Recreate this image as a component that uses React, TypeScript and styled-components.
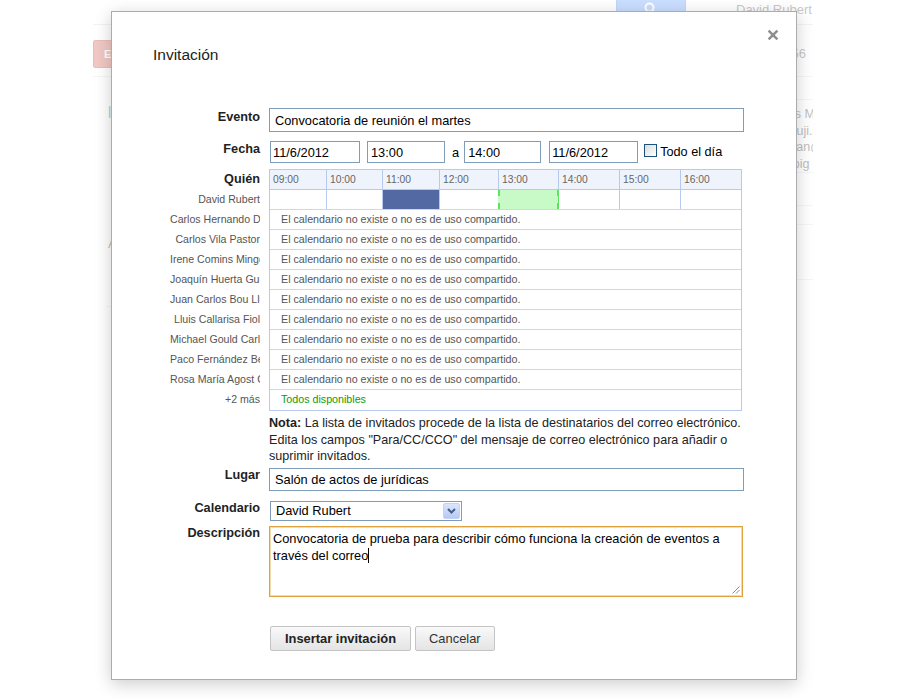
import React from "react";
import styled, { createGlobalStyle } from "styled-components";

const FONT = `"Liberation Sans", Arial, Helvetica, sans-serif`;

const GlobalStyle = createGlobalStyle`
  html, body { margin: 0; padding: 0; background: #fff; }
  body { font-family: ${FONT}; width: 900px; height: 699px; overflow: hidden; }
  * { box-sizing: border-box; }
`;

const Screen = styled.div`
  position: relative;
  width: 900px;
  height: 699px;
  overflow: hidden;
  background: #fff;
`;

/* ---------- background (Gmail page behind the modal) ---------- */
const BgPage = styled.div`
  margin-left: 93px;
  width: 720px;
  height: 699px;
  overflow: hidden;
  color: #222;
  font-size: 13px;
`;

const BgHeader = styled.div`
  height: 25px;
  border-bottom: 1px solid #d6d6d6;
  display: flex;
  align-items: flex-start;
`;

const SearchButton = styled.div`
  margin-left: 523px;
  margin-top: -6px;
  width: 70px;
  height: 30px;
  background: #4d90fe;
  border: 1px solid #3079ed;
  border-radius: 2px;
  display: flex;
  align-items: center;
  justify-content: center;
`;

const BgUser = styled.div`
  margin-left: 50px;
  padding-top: 2px;
  color: #444;
  white-space: nowrap;
`;

const BgToolbar = styled.div`
  height: 52px;
  border-bottom: 1px solid #e0e0e0;
  display: flex;
  align-items: flex-start;
  justify-content: space-between;
`;

const ComposeButton = styled.div`
  margin-top: 15px;
  width: 72px;
  height: 28px;
  background: #d14836;
  border: 1px solid #b0281a;
  border-radius: 2px;
  color: #fff;
  font-weight: bold;
  font-size: 11px;
  line-height: 26px;
  padding-left: 10px;
`;

const PageCount = styled.div`
  margin-top: 21px;
  margin-right: 7px;
  color: #444;
`;

const BgMain = styled.div`
  display: flex;
  height: 620px;
`;

const LeftNav = styled.div`
  width: 120px;
  padding-top: 26px;
  display: flex;
  flex-direction: column;
`;

const NavItem = styled.div<{ $gap?: number }>`
  margin-top: ${(p) => p.$gap ?? 0}px;
  padding-left: 15px;
  height: 15px;
  color: #222;
  white-space: nowrap;
`;

const NavRule = styled.div`
  margin-top: 55px;
  margin-left: 14px;
  border-top: 1px solid #e0e0e0;
`;

const RightPanel = styled.div`
  margin-left: auto;
  width: 48px;
  display: flex;
  flex-direction: column;
`;

const PanelSection = styled.div<{ $h: number }>`
  height: ${(p) => p.$h}px;
  border-bottom: 1px solid #e2e2e2;
  padding-top: 6px;
  padding-left: 0;
  font-size: 12.5px;
  line-height: 16.5px;
  color: #222;
  white-space: nowrap;
`;

const Overlay = styled.div`
  position: absolute;
  inset: 0;
  background: rgba(255, 255, 255, 0.7);
`;

/* ---------- dialog ---------- */
const Dialog = styled.div`
  position: absolute;
  left: 111px;
  top: 11px;
  width: 686px;
  height: 669px;
  background: #fff;
  border: 1px solid #acacac;
  box-shadow: 0 4px 16px rgba(0, 0, 0, 0.2);
  padding: 33px 0 0 41px;
  color: #222;
`;

const CloseButton = styled.button`
  position: absolute;
  top: 17px;
  right: 17px;
  width: 12px;
  height: 12px;
  padding: 0;
  border: 0;
  background: none;
  display: flex;
`;

const Title = styled.h2`
  margin: 0;
  font-size: 15.5px;
  line-height: 20px;
  font-weight: normal;
  color: #222;
`;

const Form = styled.div`
  margin-top: 43px;
  display: flex;
  flex-direction: column;
`;

const FieldRow = styled.div<{ $mt?: number }>`
  display: grid;
  grid-template-columns: 107px 475px;
  column-gap: 9px;
  margin-top: ${(p) => p.$mt ?? 0}px;
`;

const FieldLabel = styled.div<{ $pt?: number }>`
  text-align: right;
  font-weight: bold;
  font-size: 12.7px;
  line-height: 14px;
  color: #222;
  padding-top: ${(p) => p.$pt ?? 0}px;
  white-space: nowrap;
`;

const TextField = styled.input<{ $w?: number; $h?: number; $pl?: number; $ml?: number }>`
  display: block;
  width: ${(p) => p.$w ?? 475}px;
  height: ${(p) => p.$h ?? 24}px;
  margin: 0 0 0 ${(p) => p.$ml ?? 0}px;
  border: 1px solid #7f9db9;
  border-radius: 0;
  padding: 0 0 0 ${(p) => p.$pl ?? 5}px;
  font: 12.8px ${FONT};
  color: #000;
  background: #fff;
  outline: none;
`;

const DateLine = styled.div`
  display: flex;
  align-items: center;
  height: 22px;
`;

const Connector = styled.span`
  margin: 0 5px 0 7px;
  font-size: 12.8px;
  color: #000;
`;

const CheckBox = styled.span`
  width: 13px;
  height: 13px;
  margin-left: 6px;
  margin-top: -4px;
  border: 1px solid #1c5180;
  background: linear-gradient(135deg, #dcdcd7, #ffffff);
`;

const CheckText = styled.span`
  margin-left: 3px;
  font-size: 12.7px;
  color: #000;
`;

/* schedule */
const WhoColumn = styled.div`
  display: flex;
  flex-direction: column;
  align-items: flex-end;
  padding-top: 1px;
`;

const WhoHeading = styled(FieldLabel)`
  height: 20px;
  line-height: 19px;
`;

const GuestName = styled.div`
  width: 90px;
  height: 20px;
  line-height: 19px;
  overflow: hidden;
  white-space: nowrap;
  text-align: right;
  font-size: 10.6px;
  color: #555;
`;

const Schedule = styled.div`
  width: 473px;
  border: 1px solid #b7c9ef;
`;

const TimeRow = styled.div<{ $header?: boolean }>`
  display: grid;
  grid-template-columns: 57px 56px 57px 59px 60px 61px 61px 60px;
  height: 20px;
  border-bottom: 1px solid ${(p) => (p.$header ? "#b7c9ef" : "#d6d6d6")};
  background: ${(p) => (p.$header ? "#eff4fc" : "#fff")};
`;

const TimeCell = styled.div<{ $state?: "busy" | "proposed" }>`
  border-right: 1px solid #b7c9ef;
  padding-left: 3px;
  font-size: 10.3px;
  line-height: 19px;
  color: #666;
  &:last-child {
    border-right: none;
  }
  ${(p) => p.$state === "busy" && `background: #5269a3;`}
  ${(p) =>
    p.$state === "proposed" &&
    `
    background-color: #c8fac8;
    border-right-color: #5ee35e;
    background-image: repeating-linear-gradient(to bottom, #5ee35e 0 6px, transparent 6px 13px),
      repeating-linear-gradient(to bottom, #5ee35e 0 6px, transparent 6px 13px);
    background-size: 2px 100%, 1px 100%;
    background-position: left top, right top;
    background-repeat: no-repeat;
    margin-left: -1px;
  `}
`;

const MessageRow = styled.div<{ $ok?: boolean }>`
  height: 20px;
  border-bottom: 1px solid #d6d6d6;
  padding-left: 11px;
  line-height: 19px;
  font-size: 10.7px;
  white-space: nowrap;
  color: ${(p) => (p.$ok ? "#0a9c0a" : "#555")};
  &:last-child {
    border-bottom: none;
  }
`;

const Note = styled.p`
  margin: 0;
  font-size: 12.6px;
  line-height: 16.5px;
  color: #222;
  white-space: nowrap;
`;

const SelectBox = styled.div`
  width: 192px;
  height: 20px;
  margin-left: 1px;
  border: 1px solid #7f9db9;
  background: #fff;
  display: flex;
  align-items: center;
  justify-content: space-between;
  padding: 1px 1px 1px 5px;
  font-size: 12.8px;
  color: #000;
`;

const SelectArrow = styled.span`
  width: 17px;
  height: 16px;
  border: 1px solid #c3d3f7;
  border-radius: 2px;
  background: linear-gradient(#dbe5fd, #b6c9f6);
  display: flex;
  align-items: center;
  justify-content: center;
`;

const DescriptionBox = styled.div`
  position: relative;
  width: 474px;
  height: 71px;
  border: 1px solid #dea33c;
  box-shadow: inset 0 0 0 1px #f4dcaa;
  padding: 3px 3px;
  font-size: 12.8px;
  line-height: 17px;
  color: #000;
`;

const Caret = styled.span`
  display: inline-block;
  width: 1px;
  height: 15px;
  background: #000;
  vertical-align: -3px;
`;

const Grip = styled.svg`
  position: absolute;
  right: 2px;
  bottom: 2px;
`;

const ButtonBar = styled.div`
  display: flex;
  gap: 4px;
  padding-left: 1px;
`;

const ActionButton = styled.button<{ $primary?: boolean }>`
  height: 25px;
  margin: 0;
  padding: 0 ${(p) => (p.$primary ? 14 : 13)}px;
  border: 1px solid #c4c4c4;
  border-radius: 2px;
  background: linear-gradient(#f9f9f9, #e4e4e4);
  font-family: ${FONT};
  font-size: 12.9px;
  font-weight: ${(p) => (p.$primary ? "bold" : "normal")};
  color: ${(p) => (p.$primary ? "#222" : "#333")};
  white-space: nowrap;
`;

const hours = ["09:00", "10:00", "11:00", "12:00", "13:00", "14:00", "15:00", "16:00"];
const guests = [
  "Carlos Hernando Díaz",
  "Carlos Vila Pastor",
  "Irene Comins Mingol",
  "Joaquín Huerta Guijarro",
  "Juan Carlos Bou Llusar",
  "Lluis Callarisa Fiol",
  "Michael Gould Carlson",
  "Paco Fernández Beltrán",
  "Rosa María Agost Canós",
];
const NOT_SHARED = "El calendario no existe o no es de uso compartido.";

function BackgroundPage() {
  return (
    <BgPage>
      <BgHeader>
        <SearchButton>
          <svg width="14" height="14" viewBox="0 0 14 14">
            <circle cx="5.5" cy="5.5" r="4" fill="none" stroke="#fff" strokeWidth="2" />
            <path d="M8.5 8.5 L12.5 12.5" stroke="#fff" strokeWidth="2.4" />
          </svg>
        </SearchButton>
        <BgUser>David Rubert</BgUser>
      </BgHeader>
      <BgToolbar>
        <ComposeButton>ESCRIBIR</ComposeButton>
        <PageCount>1–50 de 156</PageCount>
      </BgToolbar>
      <BgMain>
        <LeftNav>
          <NavItem>|Recibidos (56)</NavItem>
          <NavItem $gap={118}>Añadir a círculos</NavItem>
          <NavRule />
        </LeftNav>
        <RightPanel>
          <PanelSection $h={23} />
          <PanelSection $h={73}>
            Carlos M
            <br />
            vila@uji.es
            <br />
            chernan@uji.es
            <br />
            Gil Roig
          </PanelSection>
          <PanelSection $h={33} />
          <PanelSection $h={19} />
          <PanelSection $h={55} />
        </RightPanel>
      </BgMain>
    </BgPage>
  );
}

export default function App() {
  return (
    <>
      <GlobalStyle />
      <Screen>
        <BackgroundPage />
        <Overlay />
        <Dialog>
          <CloseButton aria-label="Cerrar">
            <svg width="12" height="12" viewBox="0 0 12 12">
              <path d="M1.6 1.6 L10.4 10.4 M10.4 1.6 L1.6 10.4" stroke="#8e8e8e" strokeWidth="2.5" />
            </svg>
          </CloseButton>
          <Title>Invitación</Title>
          <Form>
            <FieldRow>
              <FieldLabel $pt={2}>Evento</FieldLabel>
              <TextField defaultValue="Convocatoria de reunión el martes" />
            </FieldRow>

            <FieldRow $mt={9}>
              <FieldLabel $pt={1}>Fecha</FieldLabel>
              <DateLine>
                <TextField $w={90} $h={22} $pl={2} $ml={1} defaultValue="11/6/2012" />
                <TextField $w={78} $h={22} $pl={3} $ml={7} defaultValue="13:00" />
                <Connector>a</Connector>
                <TextField $w={77} $h={22} $pl={3} defaultValue="14:00" />
                <TextField $w={89} $h={22} $pl={2} $ml={8} defaultValue="11/6/2012" />
                <CheckBox />
                <CheckText>Todo el día</CheckText>
              </DateLine>
            </FieldRow>

            <FieldRow $mt={6}>
              <WhoColumn>
                <WhoHeading>Quién</WhoHeading>
                <GuestName>David Rubert</GuestName>
                {guests.map((g) => (
                  <GuestName key={g}>{g}</GuestName>
                ))}
                <GuestName>+2 más</GuestName>
              </WhoColumn>
              <Schedule>
                <TimeRow $header>
                  {hours.map((h) => (
                    <TimeCell key={h}>{h}</TimeCell>
                  ))}
                </TimeRow>
                <TimeRow>
                  {hours.map((h, i) => (
                    <TimeCell key={h} $state={i === 2 ? "busy" : i === 4 ? "proposed" : undefined} />
                  ))}
                </TimeRow>
                {guests.map((g) => (
                  <MessageRow key={g}>{NOT_SHARED}</MessageRow>
                ))}
                <MessageRow $ok>Todos disponibles</MessageRow>
              </Schedule>
            </FieldRow>

            <FieldRow $mt={4}>
              <span />
              <Note>
                <b>Nota:</b> La lista de invitados procede de la lista de destinatarios del correo electrónico.
                <br />
                Edita los campos "Para/CC/CCO" del mensaje de correo electrónico para añadir o
                <br />
                suprimir invitados.
              </Note>
            </FieldRow>

            <FieldRow $mt={3}>
              <FieldLabel $pt={0}>Lugar</FieldLabel>
              <TextField $h={23} defaultValue="Salón de actos de jurídicas" />
            </FieldRow>

            <FieldRow $mt={10}>
              <FieldLabel $pt={0}>Calendario</FieldLabel>
              <SelectBox>
                <span>David Rubert</span>
                <SelectArrow>
                  <svg width="9" height="6" viewBox="0 0 9 6">
                    <path d="M1 1 L4.5 4.5 L8 1" fill="none" stroke="#4a5e86" strokeWidth="2" />
                  </svg>
                </SelectArrow>
              </SelectBox>
            </FieldRow>

            <FieldRow $mt={5}>
              <FieldLabel $pt={0}>Descripción</FieldLabel>
              <DescriptionBox>
                Convocatoria de prueba para describir cómo funciona la creación de eventos a través del correo
                <Caret />
                <Grip width="9" height="9" viewBox="0 0 9 9">
                  <path d="M8.5 1.5 L1.5 8.5 M8.5 5 L5 8.5" stroke="#8a8a8a" strokeWidth="1" />
                </Grip>
              </DescriptionBox>
            </FieldRow>

            <FieldRow $mt={29}>
              <span />
              <ButtonBar>
                <ActionButton $primary>Insertar invitación</ActionButton>
                <ActionButton>Cancelar</ActionButton>
              </ButtonBar>
            </FieldRow>
          </Form>
        </Dialog>
      </Screen>
    </>
  );
}
